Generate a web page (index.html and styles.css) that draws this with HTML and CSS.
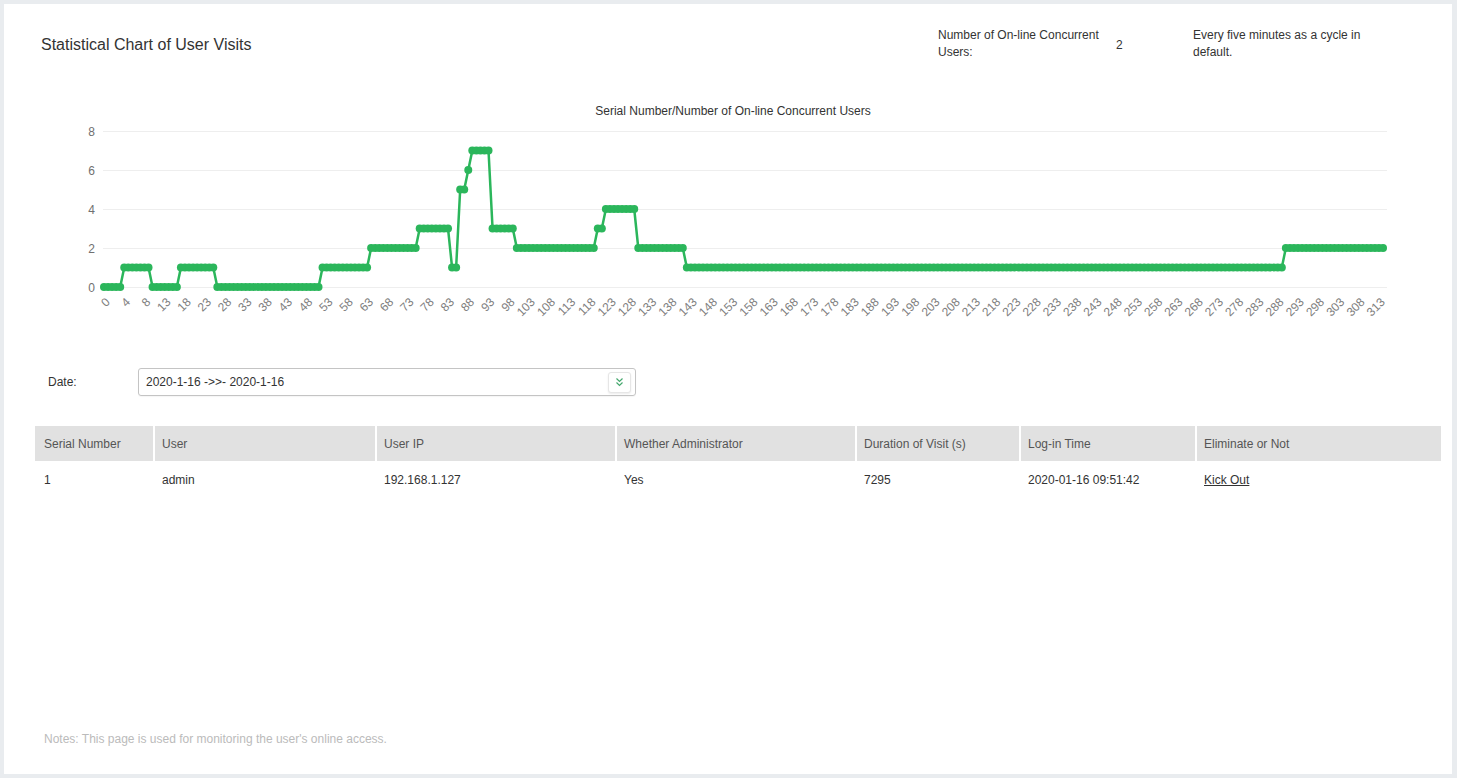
FILE: index.html
```html
<!DOCTYPE html>
<html lang="en">
<head>
<meta charset="utf-8">
<title>Statistical Chart of User Visits</title>
<link rel="stylesheet" href="styles.css">
</head>
<body>
<div class="panel">
  <header class="header">
    <h1 class="title">Statistical Chart of User Visits</h1>
    <div class="stats">
      <div class="stat-label">Number of On-line Concurrent Users:</div>
      <div class="stat-value">2</div>
      <div class="stat-desc">Every five minutes as a cycle in default.</div>
    </div>
  </header>

  <div class="chart" id="chart"></div>

  <div class="date-row">
    <span class="date-label">Date:</span>
    <div class="date-select">
      <span class="date-text">2020-1-16 -&gt;&gt;- 2020-1-16</span>
      <span class="date-btn">
        <svg width="23" height="21" viewBox="0 0 23 21" aria-hidden="true">
          <polyline points="8.5,6.5 11.5,9.5 14.5,6.5" fill="none" stroke="#45a86e" stroke-width="1.2"/>
          <polyline points="8.5,10.5 11.5,13.5 14.5,10.5" fill="none" stroke="#45a86e" stroke-width="1.2"/>
        </svg>
      </span>
    </div>
  </div>

  <table class="users">
    <colgroup>
      <col class="c1"><col class="c2"><col class="c3"><col class="c4"><col class="c5"><col class="c6"><col class="c7">
    </colgroup>
    <thead>
      <tr>
        <th>Serial Number</th>
        <th>User</th>
        <th>User IP</th>
        <th>Whether Administrator</th>
        <th>Duration of Visit (s)</th>
        <th>Log-in Time</th>
        <th>Eliminate or Not</th>
      </tr>
    </thead>
    <tbody>
      <tr>
        <td>1</td>
        <td>admin</td>
        <td>192.168.1.127</td>
        <td>Yes</td>
        <td>7295</td>
        <td>2020-01-16 09:51:42</td>
        <td><a class="kick" href="#">Kick Out</a></td>
      </tr>
    </tbody>
  </table>

  <p class="notes">Notes: This page is used for monitoring the user's online access.</p>
</div>
<script src="script.js"></script>
</body>
</html>
```

FILE: styles.css
```css
html, body {
  margin: 0;
}
body {
  background: #e9ecef;
  padding: 4px 5px 4px 4px;
  font-family: "Liberation Sans", Arial, sans-serif;
  font-size: 12px;
  color: #333;
}
.panel {
  background: #fff;
  height: 770px;
  display: flex;
  flex-direction: column;
  box-sizing: border-box;
}
.header {
  display: flex;
  align-items: flex-start;
  height: 91px;
  box-sizing: border-box;
  padding: 23px 79px 0 37px;
}
.title {
  margin: 8px 0 0;
  font-size: 16px;
  line-height: 20px;
  font-weight: normal;
  color: #333;
}
.stats {
  margin-left: auto;
  display: flex;
  align-items: center;
  line-height: 17px;
  color: #333;
}
.stat-label { width: 178px; }
.stat-value { width: 77px; padding-top: 2px; }
.stat-desc { width: 180px; }

.chart {
  height: 240px;
}
.chart svg {
  display: block;
  font-family: "Liberation Sans", Arial, sans-serif;
}

.date-row {
  display: flex;
  align-items: center;
  margin: 33px 0 0 44px;
  height: 28px;
}
.date-label {
  width: 90px;
  color: #333;
}
.date-select {
  width: 498px;
  height: 28px;
  box-sizing: border-box;
  border: 1px solid #c4c4c4;
  border-radius: 3px;
  display: flex;
  align-items: center;
  justify-content: space-between;
  padding: 0 4px 0 7px;
  box-shadow: 0 1px 1px rgba(0,0,0,0.04);
}
.date-text { color: #333; }
.date-btn {
  width: 23px;
  height: 21px;
  box-sizing: border-box;
  border: 1px solid #e6e6e6;
  border-radius: 3px;
  background: #fff;
  box-shadow: 0 1px 2px rgba(0,0,0,0.08);
  display: flex;
}
.date-btn svg { display: block; margin: -1px; }

.users {
  margin: 30px 0 0 31px;
  width: 1406px;
  border-collapse: separate;
  border-spacing: 0;
  table-layout: fixed;
}
.c1 { width: 118px; }
.c2 { width: 222px; }
.c3 { width: 240px; }
.c4 { width: 240px; }
.c5 { width: 164px; }
.c6 { width: 176px; }
.c7 { width: 246px; }
.users th {
  background: #e1e1e1;
  height: 35px;
  padding: 0 0 0 7px;
  text-align: left;
  font-weight: normal;
  color: #555;
  border-left: 2px solid #fff;
  box-sizing: border-box;
}
.users td {
  height: 37px;
  padding: 0 0 0 7px;
  color: #333;
  border-left: 2px solid transparent;
}
.users th:first-child,
.users td:first-child {
  border-left: none;
  padding-left: 9px;
}
.kick {
  color: #333;
  text-decoration: underline;
}
.notes {
  margin: auto 0 0 40px;
  padding-bottom: 28px;
  line-height: 14px;
  color: #bbb;
}
```

FILE: script.js
```js
(function () {
  var ns = "http://www.w3.org/2000/svg";
  var W = 1448, H = 240;
  var svg = document.createElementNS(ns, "svg");
  svg.setAttribute("width", W);
  svg.setAttribute("height", H);
  svg.setAttribute("viewBox", "0 0 " + W + " " + H);

  function el(name, attrs, text) {
    var e = document.createElementNS(ns, name);
    for (var k in attrs) e.setAttribute(k, attrs[k]);
    if (text !== undefined) e.textContent = text;
    svg.appendChild(e);
    return e;
  }

  var gx0 = 99, gx1 = 1383, y0 = 192, unit = 19.5;
  var px0 = 100, px1 = 1379, N = 317;
  var step = (px1 - px0) / (N - 1);

  // title
  el("text", { x: 729, y: 16, "text-anchor": "middle", "dominant-baseline": "central", "font-size": 12, fill: "#333" },
     "Serial Number/Number of On-line Concurrent Users");

  // grid + y labels
  for (var v = 0; v <= 8; v += 2) {
    var y = y0 - v * unit;
    el("line", { x1: gx0, x2: gx1, y1: y + 0.5, y2: y + 0.5, stroke: "#eeeeee", "stroke-width": 1 });
    el("text", { x: 91, y: y + 1, "text-anchor": "end", "dominant-baseline": "central", "font-size": 12, fill: "#707070" }, String(v));
  }

  // data
  var segs = [
    [0, 4, 0], [5, 11, 1], [12, 18, 0], [19, 27, 1], [28, 53, 0], [54, 65, 1],
    [66, 77, 2], [78, 85, 3], [86, 87, 1], [88, 89, 5], [90, 90, 6], [91, 95, 7],
    [96, 101, 3], [102, 121, 2], [122, 123, 3], [124, 131, 4], [132, 143, 2],
    [144, 291, 1], [292, 316, 2]
  ];
  var data = [];
  segs.forEach(function (s) { for (var i = s[0]; i <= s[1]; i++) data[i] = s[2]; });

  var pts = [];
  for (var i = 0; i < N; i++) {
    pts.push((px0 + i * step).toFixed(2) + "," + (y0 - data[i] * unit).toFixed(2));
  }
  var green = "#2bb65b";
  el("polyline", { points: pts.join(" "), fill: "none", stroke: green, "stroke-width": 2.5, "stroke-linejoin": "round" });
  for (var j = 0; j < N; j++) {
    el("circle", { cx: (px0 + j * step).toFixed(2), cy: (y0 - data[j] * unit).toFixed(2), r: 4, fill: green });
  }

  // x labels
  var labels = ["0", "4", "8"];
  for (var n = 13; n <= 313; n += 5) labels.push(String(n));
  labels.forEach(function (t, k) {
    var x = px0 + k * 5 * step + 4;
    var yy = y0 + 13;
    el("text", {
      x: 0, y: 0, transform: "translate(" + x.toFixed(2) + "," + yy + ") rotate(-45)",
      "text-anchor": "end", "dominant-baseline": "central", "font-size": 12, fill: "#808080"
    }, t);
  });

  document.getElementById("chart").appendChild(svg);
})();
```
